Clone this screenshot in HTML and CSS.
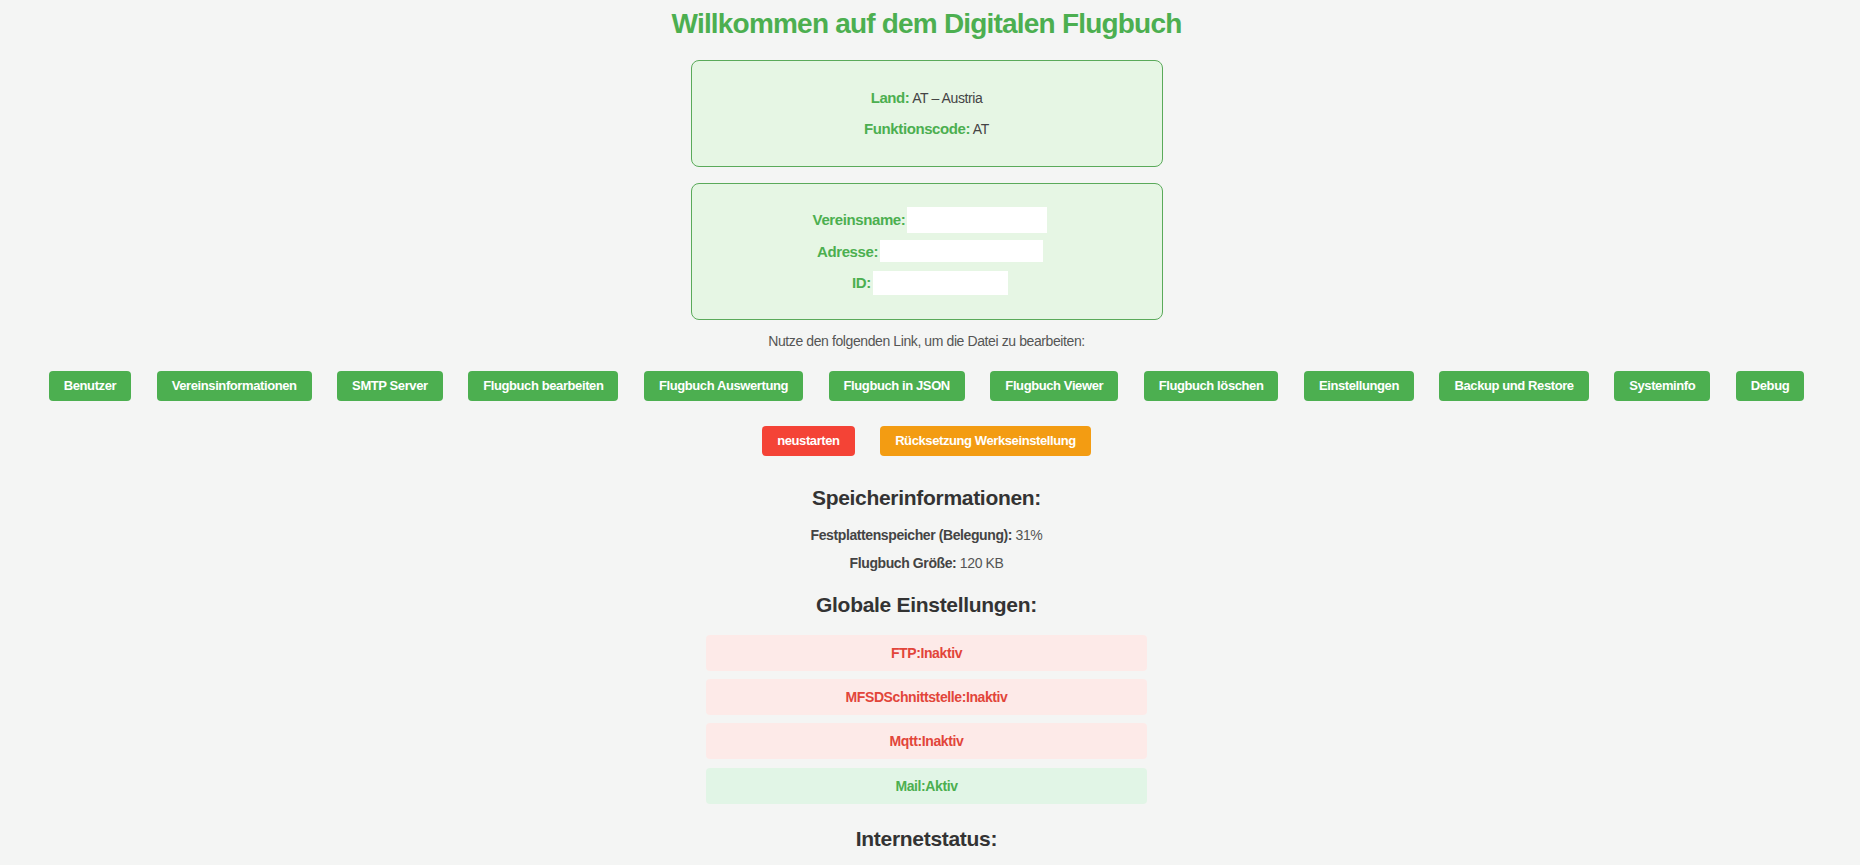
FILE: index.html
```html
<!DOCTYPE html>
<html lang="de">
<head>
<meta charset="utf-8">
<title>Digitales Flugbuch</title>
<link rel="stylesheet" href="styles.css">
</head>
<body>
<main class="page">
  <h1 class="title">Willkommen auf dem Digitalen Flugbuch</h1>

  <section class="card">
    <p class="card-line"><span class="label">Land:</span> AT – Austria</p>
    <p class="card-line"><span class="label">Funktionscode:</span> AT</p>
  </section>

  <section class="card card-form">
    <div class="field"><label class="label" for="vname">Vereinsname:</label><input id="vname" class="field-input field-input-name" type="text"></div>
    <div class="field"><label class="label" for="vaddr">Adresse:</label><input id="vaddr" class="field-input field-input-addr" type="text"></div>
    <div class="field"><label class="label" for="vid">ID:</label><input id="vid" class="field-input field-input-id" type="text"></div>
  </section>

  <p class="hint">Nutze den folgenden Link, um die Datei zu bearbeiten:</p>

  <nav class="actions">
    <a class="btn" href="#">Benutzer</a>
    <a class="btn" href="#">Vereinsinformationen</a>
    <a class="btn" href="#">SMTP Server</a>
    <a class="btn" href="#">Flugbuch bearbeiten</a>
    <a class="btn" href="#">Flugbuch Auswertung</a>
    <a class="btn" href="#">Flugbuch in JSON</a>
    <a class="btn" href="#">Flugbuch Viewer</a>
    <a class="btn" href="#">Flugbuch löschen</a>
    <a class="btn" href="#">Einstellungen</a>
    <a class="btn" href="#">Backup und Restore</a>
    <a class="btn" href="#">Systeminfo</a>
    <a class="btn" href="#">Debug</a>
  </nav>

  <div class="actions actions-system">
    <a class="btn btn-danger" href="#">neustarten</a>
    <a class="btn btn-warning" href="#">Rücksetzung Werkseinstellung</a>
  </div>

  <h3 class="section-title">Speicherinformationen:</h3>
  <p class="info"><strong>Festplattenspeicher (Belegung):</strong> 31%</p>
  <p class="info"><strong>Flugbuch Größe:</strong> 120 KB</p>

  <h3 class="section-title">Globale Einstellungen:</h3>
  <div class="status-list">
    <div class="status status-off">FTP:Inaktiv</div>
    <div class="status status-off">MFSDSchnittstelle:Inaktiv</div>
    <div class="status status-off">Mqtt:Inaktiv</div>
    <div class="status status-on">Mail:Aktiv</div>
  </div>

  <h3 class="section-title">Internetstatus:</h3>
  <div class="status-list">
    <div class="status status-on">Verbunden</div>
  </div>
</main>
</body>
</html>
```

FILE: styles.css
```css
* {
  box-sizing: border-box;
}

html, body {
  margin: 0;
  padding: 0;
}

body {
  background: #f4f5f4;
  font-family: "Liberation Sans", Arial, sans-serif;
  font-size: 14px;
  color: #444;
}

.page {
  padding: 8px 7px 40px 0;
  text-align: center;
}

.title {
  margin: 0 0 20px;
  font-size: 28px;
  line-height: 32px;
  letter-spacing: -0.8px;
  font-weight: 700;
  color: #4caf50;
}

.card {
  width: 472px;
  margin: 0 auto 16px;
  padding: 15px;
  background: #e6f6e4;
  border: 1px solid #5aaa5a;
  border-radius: 8px;
}

.card-line {
  margin: 13px 0;
  line-height: 17px;
  letter-spacing: -0.4px;
  color: #444;
}

.label {
  font-size: 15px;
  font-weight: 700;
  color: #4caf50;
}

.card-form {
  padding: 20px 15px;
  margin-bottom: 13px;
}

.field {
  display: flex;
  justify-content: center;
  align-items: center;
  gap: 2px;
  height: 31.5px;
  padding-left: 7px;
  letter-spacing: -0.4px;
}

.field-input {
  border: none;
  outline: none;
  background: #fff;
  padding: 0 4px;
  margin: 0;
}

.field-input-name {
  width: 140px;
  height: 26px;
}

.field-input-addr {
  width: 163px;
  height: 22px;
}

.field-input-id {
  width: 135px;
  height: 24px;
}

.hint {
  margin: 0 0 22px;
  line-height: 16px;
  letter-spacing: -0.4px;
  color: #555;
}

.actions {
  display: flex;
  justify-content: center;
  gap: 25.5px;
}

.actions-system {
  margin-top: 25px;
  margin-bottom: 30px;
}

.btn {
  display: inline-block;
  padding: 7px 15px;
  font-size: 13px;
  line-height: 16px;
  font-weight: 700;
  letter-spacing: -0.4px;
  color: #fff;
  background: #4caf50;
  border-radius: 4px;
  text-decoration: none;
  white-space: nowrap;
}

.btn-danger {
  background: #f44336;
}

.btn-warning {
  background: #f39c12;
}

.section-title {
  margin: 22px 0 17px;
  font-size: 21px;
  line-height: 24px;
  letter-spacing: -0.3px;
  font-weight: 700;
  color: #333;
}

.info {
  margin: 0 0 12px;
  line-height: 16px;
  letter-spacing: -0.4px;
  color: #555;
}

.info strong {
  color: #444;
}

.status-list {
  display: flex;
  flex-direction: column;
  align-items: center;
  gap: 8.4px;
  margin: 18px 0 23px;
}

.status {
  width: 441px;
  padding: 10px;
  line-height: 16px;
  font-weight: 700;
  letter-spacing: -0.4px;
  border-radius: 4px;
}

.status-off {
  background: #fdeae8;
  color: #e2453a;
}

.status-on {
  background: #e1f5e6;
  color: #4caf50;
}
```
